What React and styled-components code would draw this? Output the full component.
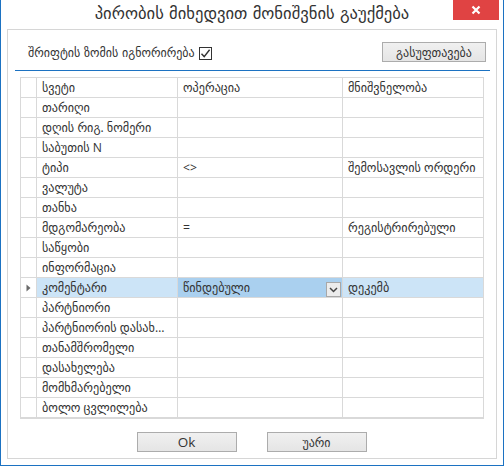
import React from "react";
import styled, { createGlobalStyle } from "styled-components";

const GlobalStyle = createGlobalStyle`
  html, body { margin: 0; padding: 0; background: #fff; }
  body { font-family: "Open Sans", "DejaVu Sans", sans-serif; color: #333; }
  * { box-sizing: border-box; }
`;

const Window = styled.div`
  width: 504px;
  height: 466px;
  border: 1px solid #1c72c2;
  border-top: none;
  background: #fff;
  display: flex;
  flex-direction: column;
`;

const TitleBar = styled.div`
  position: relative;
  height: 29px;
  display: flex;
  align-items: center;
  justify-content: center;
  padding-bottom: 2px;
`;

const Title = styled.div`
  font-family: "DejaVu Sans", sans-serif;
  font-size: 16.6px;
  color: #333;
`;

const CloseButton = styled.div`
  position: absolute;
  top: 0;
  right: 4px;
  width: 46px;
  height: 20px;
  background: #e04343;
  display: flex;
  align-items: center;
  justify-content: center;
`;

const Panel = styled.div`
  margin: 0 6px 6px 6px;
  height: 430px;
  border: 1px solid #d6d6d6;
  display: flex;
  flex-direction: column;
`;

const TopRow = styled.div`
  display: flex;
  align-items: center;
  justify-content: space-between;
  padding: 12px 10px 0 20px;
  height: 32px;
`;

const CheckLabel = styled.label`
  display: flex;
  align-items: center;
  gap: 4px;
  font-family: "DejaVu Sans", sans-serif;
  font-size: 12px;
  color: #333;
  margin-top: 2px;
`;

const CheckBox = styled.span`
  width: 13px;
  height: 13px;
  border: 1px solid #333;
  background: #fff;
  display: flex;
  align-items: center;
  justify-content: center;
`;

const Button = styled.button`
  width: ${(p) => p.$w}px;
  height: 20px;
  padding: 0;
  border: 1px solid #acacac;
  background: linear-gradient(#f0f0f0, #e5e5e5);
  font-family: "Open Sans", "DejaVu Sans", sans-serif;
  font-size: ${(p) => p.$fs || 12}px;
  color: #333;
  display: flex;
  align-items: center;
  justify-content: center;
`;

const Divider = styled.div`
  height: 1px;
  background: #1c72c2;
  margin: 8px 6px 0 7px;
`;

const Grid = styled.div`
  margin: 6px 0 0 12px;
  width: 464px;
  border-left: 1px solid #d9d9d9;
  border-top: 1px solid #d9d9d9;
  border-bottom: 1px solid #d9d9d9;
  display: flex;
  flex-direction: column;
`;

const Row = styled.div`
  display: grid;
  grid-template-columns: 16px 141px 165px 141px;
  height: 20px;
`;

const Cell = styled.div`
  border-right: 1px solid #d9d9d9;
  border-bottom: 1px solid #d9d9d9;
  padding-left: 5px;
  display: flex;
  align-items: center;
  position: relative;
  font-family: "Open Sans", "DejaVu Sans", sans-serif;
  font-size: 12.2px;
  color: #333;
  white-space: nowrap;
  overflow: hidden;
  background: ${(p) => (p.$sel === 2 ? "#aad0ef" : p.$sel ? "#cce4f7" : "#fff")};
`;

const CellText = styled.span`
  padding-bottom: 1px;
`;

const HeaderCell = styled(Cell)`
  padding-left: 0;
  justify-content: center;
`;

const DropButton = styled.div`
  position: absolute;
  right: 1px;
  top: 4px;
  width: 15px;
  height: 15px;
  border: 1px solid #a8a8a8;
  background: #ececec;
  display: flex;
  align-items: center;
  justify-content: center;
`;

const Footer = styled.div`
  display: flex;
  justify-content: center;
  gap: 30px;
  margin-top: 13px;
  padding-right: 1px;
`;

const rows = [
  ["სვეტი", "ოპერაცია", "მნიშვნელობა"],
  ["თარიღი", "", ""],
  ["დღის რიგ. ნომერი", "", ""],
  ["საბუთის N", "", ""],
  ["ტიპი", "<>", "შემოსავლის ორდერი"],
  ["ვალუტა", "", ""],
  ["თანხა", "", ""],
  ["მდგომარეობა", "=", "რეგისტრირებული"],
  ["საწყობი", "", ""],
  ["ინფორმაცია", "", ""],
  ["კომენტარი", "წინდებული", "დეკემბ", true],
  ["პარტნიორი", "", ""],
  ["პარტნიორის დასახ…", "", ""],
  ["თანამშრომელი", "", ""],
  ["დასახელება", "", ""],
  ["მომხმარებელი", "", ""],
  ["ბოლო ცვლილება", "", ""],
];

export default function App() {
  return (
    <>
      <GlobalStyle />
      <Window>
        <TitleBar>
          <Title>პირობის მიხედვით მონიშვნის გაუქმება</Title>
          <CloseButton>
            <svg width="10" height="10" viewBox="0 0 10 10">
              <path d="M1.5 1.5 L8.5 8.5 M8.5 1.5 L1.5 8.5" stroke="#fff" strokeWidth="2.2" />
            </svg>
          </CloseButton>
        </TitleBar>
        <Panel>
          <TopRow>
            <CheckLabel>
              შრიფტის ზომის იგნორირება
              <CheckBox>
                <svg width="11" height="11" viewBox="0 0 11 11">
                  <path d="M1.5 5.8 L4.2 8.6 L9.6 1.8" fill="none" stroke="#333" strokeWidth="1.4" />
                </svg>
              </CheckBox>
            </CheckLabel>
            <Button $w={104}>გასუფთავება</Button>
          </TopRow>
          <Divider />
          <Grid>
            {rows.map((r, i) => (
              <Row key={i}>
                <HeaderCell>
                  {r[3] && (
                    <svg width="5" height="8" viewBox="0 0 5 8">
                      <path d="M0.5 0.5 L4.5 4 L0.5 7.5 Z" fill="#6a6a6a" />
                    </svg>
                  )}
                </HeaderCell>
                <Cell $sel={r[3] ? 1 : 0}>
                  <CellText>{r[0]}</CellText>
                </Cell>
                <Cell $sel={r[3] ? 2 : 0}>
                  <CellText>{r[1]}</CellText>
                  {r[3] && (
                    <DropButton>
                      <svg width="9" height="6" viewBox="0 0 9 6">
                        <path d="M1 1 L4.5 4.5 L8 1" fill="none" stroke="#444" strokeWidth="1.5" />
                      </svg>
                    </DropButton>
                  )}
                </Cell>
                <Cell $sel={r[3] ? 1 : 0}>
                  <CellText>{r[2]}</CellText>
                </Cell>
              </Row>
            ))}
          </Grid>
          <Footer>
            <Button $w={100} $fs={13.5}>Ok</Button>
            <Button $w={100}>უარი</Button>
          </Footer>
        </Panel>
      </Window>
    </>
  );
}
